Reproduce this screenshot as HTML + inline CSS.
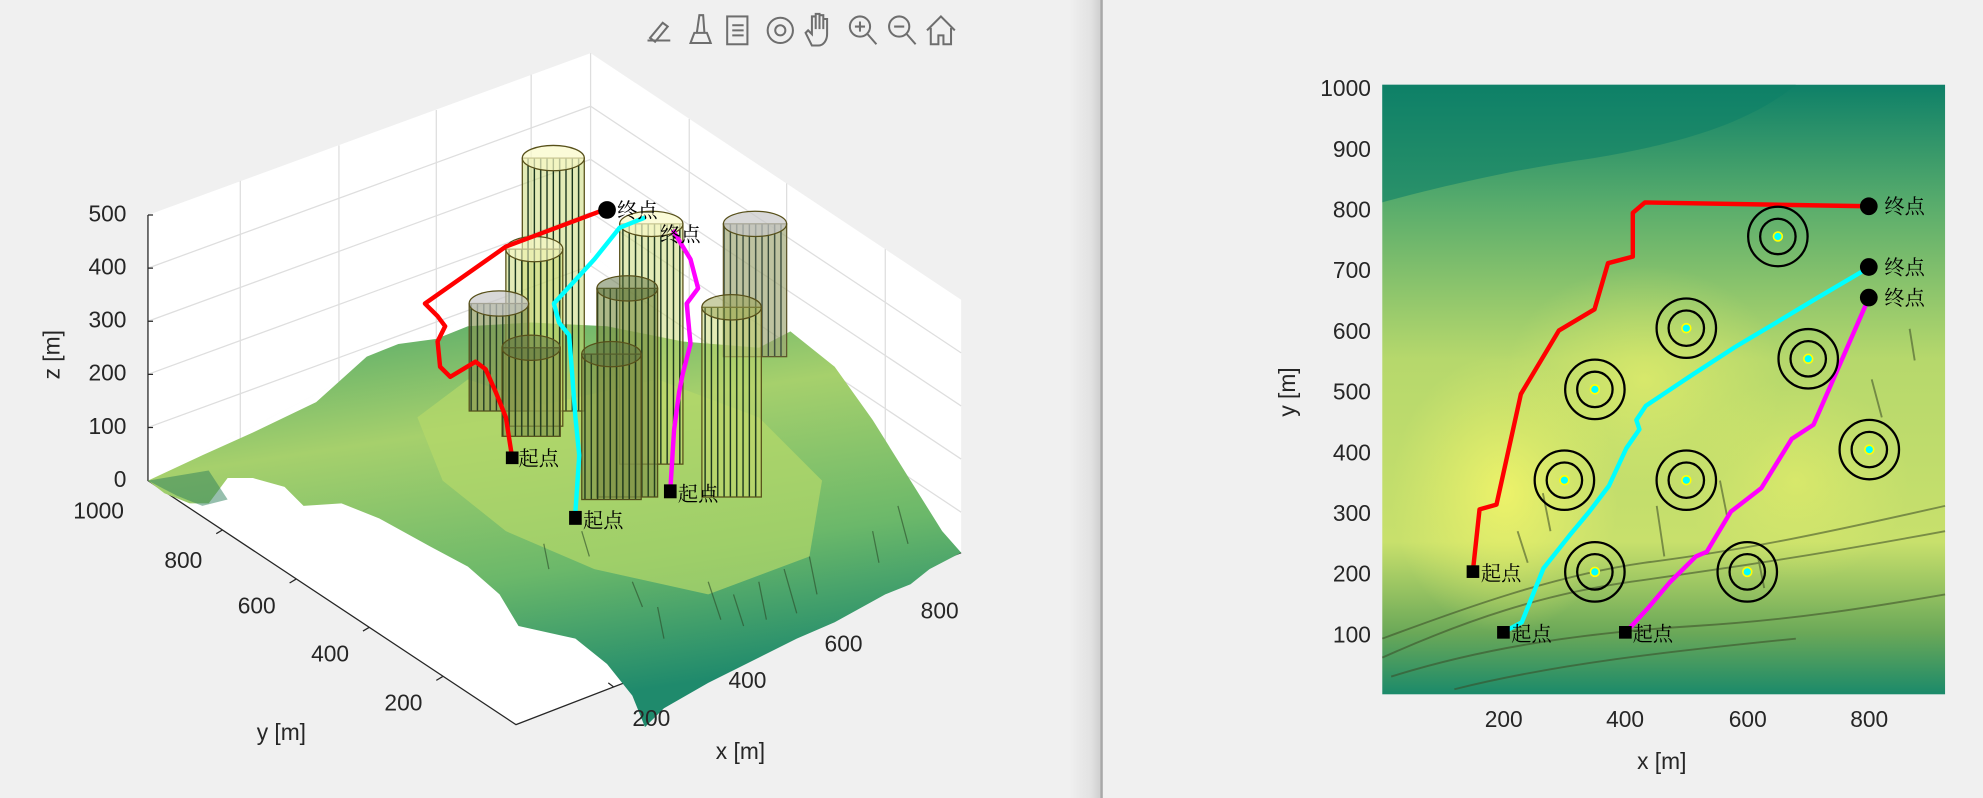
<!DOCTYPE html>
<html><head><meta charset="utf-8"><style>
html,body{margin:0;padding:0;background:#f0f0f0;overflow:hidden}
svg{display:block}
text{font-family:"Liberation Sans","Noto Sans CJK SC",sans-serif;fill:#262626}
.cj{font-family:"Liberation Serif","Noto Serif CJK SC",serif;fill:#000;font-size:16px}
</style></head><body>
<svg width="1983" height="798" viewBox="0 0 1568 631" preserveAspectRatio="none" xmlns="http://www.w3.org/2000/svg">
<defs>
<linearGradient id="div" x1="0" x2="1"><stop offset="0" stop-color="#f0f0f0"/><stop offset="0.7" stop-color="#e2e2e2"/><stop offset="1" stop-color="#d0d0d0"/></linearGradient>
<linearGradient id="ter" x1="0" y1="0" x2="0.3" y2="1"><stop offset="0" stop-color="#4aa56a"/><stop offset="0.35" stop-color="#a6d06c"/><stop offset="0.7" stop-color="#6bb86a"/><stop offset="1" stop-color="#1f8a6c"/></linearGradient>
<linearGradient id="map" x1="0" y1="0" x2="0" y2="1"><stop offset="0" stop-color="#0e8068"/><stop offset="0.2" stop-color="#5aad6c"/><stop offset="0.45" stop-color="#b6d86c"/><stop offset="0.75" stop-color="#c8e06c"/><stop offset="0.9" stop-color="#6aa858"/><stop offset="1" stop-color="#1b8a6a"/></linearGradient>
<radialGradient id="yl" cx="0.5" cy="0.5" r="0.5"><stop offset="0" stop-color="#f2f56a" stop-opacity="0.9"/><stop offset="1" stop-color="#e8f06a" stop-opacity="0"/></radialGradient>
<pattern id="st" width="5" height="10" patternUnits="userSpaceOnUse"><rect width="5" height="10" fill="rgba(200,215,110,0.5)"/><rect x="2" width="1.1" height="10" fill="#17331c"/></pattern>
</defs>
<rect width="1568" height="631" fill="#f0f0f0"/>
<rect x="845" y="0" width="25" height="631" fill="url(#div)"/>
<rect x="870" y="0" width="2" height="631" fill="#a8a8a8"/>

<!-- toolbar -->
<g fill="none" stroke="#6e6e6e" stroke-width="1.6">
<path d="M512 32h18M514 30l10-12 4 3-10 12z"/>
<path d="M546 34h16l-3-8h-10zM551 26l2-14h3l1 14"/>
<rect x="575" y="13" width="16" height="22"/><path d="M579 20h9M579 24h9M579 28h9"/>
<circle cx="617" cy="24" r="10"/><circle cx="617" cy="24" r="4"/>
<path d="M642 36l-5-10 2-2 3 3v-14h3v10v-12h3v12v-11h3v11v-8h3v12c0 5-3 9-7 9z"/>
<circle cx="680" cy="21" r="8"/><path d="M686 27l7 8M676 21h8M680 17v8"/>
<circle cx="711" cy="21" r="8"/><path d="M717 27l7 8M707 21h8"/>
<path d="M733 24l11-11 11 11M736 22v13h6v-7h4v7h6v-13"/>
</g>

<!-- 3D box walls -->
<polygon points="117,170 467,42 467,200 117,380" fill="#fff"/>
<polygon points="467,42 760,237 760,437 467,200" fill="#fff"/>
<polygon points="117,380 467,200 760,437 408,573" fill="#fff"/>
<g stroke="#dedede" stroke-width="1" fill="none">
<path d="M117,212 L467,84 L760,279 M117,254 L467,126 L760,321 M117,296 L467,168 L760,363 M117,338 L467,210 L760,405"/>
<path d="M190,143 V353 M268,115 V325 M345,87 V297 M420,59 V268 M545,94 V262 M622,145 V325 M700,197 V388"/>
<path d="M467,42 V200"/>
</g>
<g stroke="#262626" stroke-width="1" fill="none">
<path d="M117,170 V380 L408,573 L760,437"/>
<path d="M117,170 l4,0 M117,212 l4,0 M117,254 l4,0 M117,296 l4,0 M117,338 l4,0"/>
<path d="M176,419 l-5,3 M234,458 l-5,3 M292,496 l-5,3 M350,535 l-5,3"/>
<path d="M485,543 l-4,-3 M581,506 l-4,-3 M641,483 l-4,-3 M720,452 l-4,-3"/>
</g>

<!-- terrain -->
<polygon fill="url(#ter)" points="117,380 160,360 200,342 250,318 270,300 290,282 315,272 345,268 370,258 420,255 480,258 540,270 600,275 625,262 660,290 690,332 720,380 745,420 760,437 735,450 720,462 700,470 660,492 630,505 600,520 560,540 525,560 510,575 500,550 480,525 455,505 410,495 395,470 370,448 340,432 300,410 270,398 240,400 225,385 200,378 180,378 165,398 150,398 130,390"/>
<polygon fill="#b5d86a" opacity="0.7" points="330,330 370,300 430,320 520,300 600,330 650,380 640,440 560,470 470,450 400,420 350,380"/>
<polygon fill="#2e7f5c" opacity="0.5" points="117,380 165,372 180,395 160,400 140,392"/>
<g stroke="#2b4a28" stroke-width="1" opacity="0.6">
<path d="M560,460l10,30M580,470l8,25M600,460l6,30M620,450l10,35M640,440l6,30M520,480l5,25M500,460l8,20M690,420l5,25M710,400l8,30M430,430l4,20M460,420l6,20"/>
</g>

<!-- cylinders -->
<g stroke="#57501a" stroke-width="1">
<rect x="413" y="125" width="49" height="200" fill="url(#st)"/><ellipse cx="437.5" cy="125" rx="24.5" ry="10" fill="rgba(250,250,200,0.7)"/>
<rect x="572" y="177" width="50" height="105" fill="url(#st)"/><rect x="572" y="177" width="50" height="105" fill="rgba(120,120,120,0.35)" stroke="none"/><ellipse cx="597" cy="177" rx="25" ry="10" fill="rgba(200,200,200,0.7)"/>
<rect x="490" y="177" width="50" height="190" fill="url(#st)"/><ellipse cx="515" cy="177" rx="25" ry="10" fill="rgba(250,250,200,0.7)"/>
<rect x="400" y="197" width="45" height="140" fill="url(#st)"/><ellipse cx="422.5" cy="197" rx="22.5" ry="10" fill="rgba(250,250,200,0.6)"/>
<rect x="371" y="240" width="47" height="85" fill="url(#st)"/><rect x="371" y="240" width="47" height="85" fill="rgba(60,70,50,0.3)" stroke="none"/><ellipse cx="394.5" cy="240" rx="23.5" ry="10" fill="rgba(200,200,200,0.7)"/>
<rect x="472" y="228" width="48" height="165" fill="url(#st)"/><rect x="472" y="228" width="48" height="165" fill="rgba(50,70,30,0.3)" stroke="none"/><ellipse cx="496" cy="228" rx="24" ry="10" fill="rgba(90,110,60,0.5)"/>
<rect x="555" y="243" width="47" height="150" fill="url(#st)"/><ellipse cx="578.5" cy="243" rx="23.5" ry="10" fill="rgba(150,160,80,0.5)"/>
<rect x="397" y="275" width="46" height="70" fill="url(#st)"/><rect x="397" y="275" width="46" height="70" fill="rgba(50,70,30,0.3)" stroke="none"/><ellipse cx="420" cy="275" rx="23" ry="10" fill="rgba(90,110,60,0.5)"/>
<rect x="460" y="280" width="47" height="115" fill="url(#st)"/><rect x="460" y="280" width="47" height="115" fill="rgba(50,70,30,0.3)" stroke="none"/><ellipse cx="483.5" cy="280" rx="23.5" ry="10" fill="rgba(90,110,60,0.5)"/>
</g>

<!-- 3D paths -->
<g fill="none" stroke-width="3.5" stroke-linejoin="round">
<path stroke="#ff0000" d="M405,362 L400,330 L392,310 L384,292 L376,286 L356,298 L348,290 L346,270 L352,258 L346,250 L336,240 L400,195 L480,165"/>
<path stroke="#00ffff" d="M455,405 L458,360 L455,330 L452,290 L450,265 L442,255 L438,240 L470,205 L490,180 L510,172"/>
<path stroke="#ff00ff" d="M530,388 L533,340 L537,310 L540,295 L546,272 L543,240 L552,228 L546,205 L532,182"/>
</g>
<circle cx="480" cy="166" r="7" fill="#000"/>
<rect x="400" y="357" width="10" height="10" fill="#000"/>
<rect x="450" y="404" width="10" height="11" fill="#000"/>
<rect x="525" y="383" width="10" height="11" fill="#000"/>
<text class="cj" x="410" y="368">起点</text>
<text class="cj" x="461" y="417">起点</text>
<text class="cj" x="536" y="396">起点</text>
<text class="cj" x="488" y="172">终点</text>
<text class="cj" x="522" y="191">终点</text>

<!-- 3D labels -->
<g font-size="18" text-anchor="end">
<text x="100" y="175">500</text><text x="100" y="217">400</text><text x="100" y="259">300</text><text x="100" y="301">200</text><text x="100" y="343">100</text><text x="100" y="385">0</text>
<text x="98" y="410">1000</text><text x="160" y="449">800</text><text x="218" y="485">600</text><text x="276" y="523">400</text><text x="334" y="562">200</text>
</g>
<g font-size="18">
<text x="500" y="574">200</text><text x="576" y="544">400</text><text x="652" y="515">600</text><text x="728" y="489">800</text>
<text x="566" y="600">x [m]</text><text x="203" y="585">y [m]</text>
<text transform="translate(47,300) rotate(-90)">z [m]</text>
</g>

<!-- 2D map -->
<rect x="1093" y="67" width="445" height="482" fill="url(#map)"/>
<ellipse cx="1190" cy="390" rx="90" ry="110" fill="url(#yl)"/>
<ellipse cx="1300" cy="300" rx="110" ry="90" fill="url(#yl)" opacity="0.6"/>
<ellipse cx="1420" cy="380" rx="90" ry="80" fill="url(#yl)" opacity="0.5"/>
<path d="M1093,67 H1420 C1380,100 1320,115 1260,125 C1190,135 1130,150 1093,160 Z" fill="#0e8068" opacity="0.6"/>
<g stroke="#3a4a26" stroke-width="1.5" fill="none" opacity="0.55">
<path d="M1093,520 C1160,490 1220,470 1290,460 C1360,450 1430,440 1538,420"/>
<path d="M1093,505 C1160,480 1230,455 1300,445 C1380,435 1450,420 1538,400"/>
<path d="M1100,535 C1180,510 1260,500 1340,495 C1420,490 1480,480 1538,470"/>
<path d="M1150,545 C1230,525 1320,515 1420,505"/>
<path d="M1200,420 l8,25 M1220,390 l6,30 M1310,400 l6,40 M1360,380 l6,30 M1390,440 l5,25 M1480,300 l8,30 M1510,260 l4,25"/>
</g>
<g fill="none" stroke-width="3.5" stroke-linejoin="round">
<path stroke="#ff0000" d="M1164.7,451 L1169.9,402.8 L1183.3,399 L1202.6,311.6 L1232.6,261.4 L1260.8,244.6 L1271.5,208.1 L1291.1,202.9 L1291.1,168.3 L1300.7,160.1 L1477.7,163.1"/>
<path stroke="#00ffff" d="M1189.5,499.5 L1203.3,492.1 L1220.5,449.3 L1241.2,423.2 L1256.7,404.6 L1272.2,384.2 L1286,354.4 L1296.3,339.5 L1293.9,332.1 L1301.4,320.9 L1337.6,296.7 L1372,274.4 L1406.4,253.9 L1437.4,235.3 L1475.3,213"/>
<path stroke="#ff00ff" d="M1285.9,499.5 L1303.1,480.9 L1320.4,460.4 L1341,440 L1349.6,436.3 L1368.6,404.6 L1392.7,386 L1416.8,347 L1434,335.8 L1477,237.2"/>
</g>
<g fill="none" stroke="#000" stroke-width="1.8">
<circle cx="1405.8" cy="187" r="23.5"/><circle cx="1405.8" cy="187" r="14"/>
<circle cx="1333.4" cy="259.5" r="23.5"/><circle cx="1333.4" cy="259.5" r="14"/>
<circle cx="1261.1" cy="307.9" r="23.5"/><circle cx="1261.1" cy="307.9" r="14"/>
<circle cx="1429.8" cy="283.7" r="23.5"/><circle cx="1429.8" cy="283.7" r="14"/>
<circle cx="1478.1" cy="355.5" r="23.5"/><circle cx="1478.1" cy="355.5" r="14"/>
<circle cx="1237" cy="379.7" r="23.5"/><circle cx="1237" cy="379.7" r="14"/>
<circle cx="1333.4" cy="379.7" r="23.5"/><circle cx="1333.4" cy="379.7" r="14"/>
<circle cx="1261.1" cy="452.2" r="23.5"/><circle cx="1261.1" cy="452.2" r="14"/>
<circle cx="1381.6" cy="452.2" r="23.5"/><circle cx="1381.6" cy="452.2" r="14"/>
</g>
<g fill="#00ffff" stroke="#ffff00" stroke-width="1.3">
<circle cx="1405.8" cy="187" r="3.5"/><circle cx="1333.4" cy="259.5" r="3.5"/><circle cx="1261.1" cy="307.9" r="3.5"/>
<circle cx="1429.8" cy="283.7" r="3.5"/><circle cx="1478.1" cy="355.5" r="3.5"/><circle cx="1237" cy="379.7" r="3.5"/>
<circle cx="1333.4" cy="379.7" r="3.5"/><circle cx="1261.1" cy="452.2" r="3.5"/><circle cx="1381.6" cy="452.2" r="3.5"/>
</g>
<circle cx="1477.7" cy="163.1" r="7" fill="#000"/>
<circle cx="1477.7" cy="211.1" r="7" fill="#000"/>
<circle cx="1477.7" cy="235.3" r="7" fill="#000"/>
<rect x="1159.7" y="447" width="10" height="10" fill="#000"/>
<rect x="1183.8" y="495" width="10" height="10" fill="#000"/>
<rect x="1280.2" y="495" width="10" height="10" fill="#000"/>
<text class="cj" x="1171" y="459">起点</text>
<text class="cj" x="1195" y="507">起点</text>
<text class="cj" x="1291" y="507">起点</text>
<text class="cj" x="1490" y="169">终点</text>
<text class="cj" x="1490" y="217">终点</text>
<text class="cj" x="1490" y="241">终点</text>
<g font-size="18" text-anchor="end">
<text x="1084" y="76">1000</text><text x="1084" y="124">900</text><text x="1084" y="172">800</text><text x="1084" y="220">700</text><text x="1084" y="268">600</text><text x="1084" y="316">500</text><text x="1084" y="364">400</text><text x="1084" y="412">300</text><text x="1084" y="460">200</text><text x="1084" y="508">100</text>
</g>
<g font-size="18" text-anchor="middle">
<text x="1189" y="575">200</text><text x="1285" y="575">400</text><text x="1382" y="575">600</text><text x="1478" y="575">800</text>
<text x="1314" y="608">x [m]</text>
<text transform="translate(1024,310) rotate(-90)">y [m]</text>
</g>
</svg>
</body></html>
